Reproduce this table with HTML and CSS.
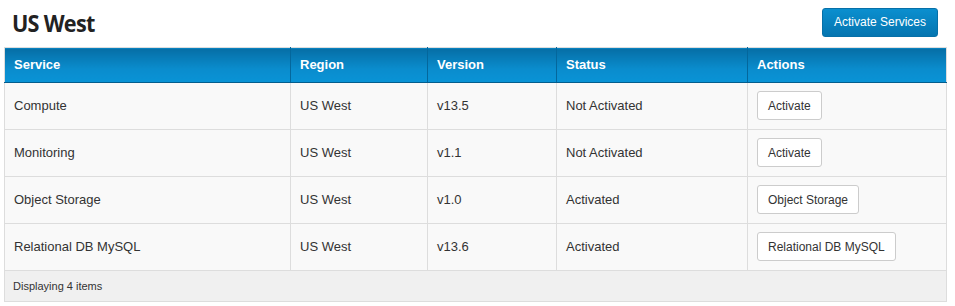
FILE: index.html
```html
<!DOCTYPE html>
<html>
<head>
<meta charset="utf-8">
<link rel="stylesheet" href="styles.css">
</head>
<body>
<div class="page">
  <div class="topbar">
    <h1 class="title">US West</h1>
    <button class="btn-primary">Activate Services</button>
  </div>
  <table class="grid">
    <thead>
      <tr>
        <th class="c1">Service</th>
        <th class="c2">Region</th>
        <th class="c3">Version</th>
        <th class="c4">Status</th>
        <th class="c5">Actions</th>
      </tr>
    </thead>
    <tbody>
      <tr>
        <td>Compute</td><td>US West</td><td>v13.5</td><td>Not Activated</td>
        <td><button class="btn">Activate</button></td>
      </tr>
      <tr>
        <td>Monitoring</td><td>US West</td><td>v1.1</td><td>Not Activated</td>
        <td><button class="btn">Activate</button></td>
      </tr>
      <tr>
        <td>Object Storage</td><td>US West</td><td>v1.0</td><td>Activated</td>
        <td><button class="btn">Object Storage</button></td>
      </tr>
      <tr>
        <td>Relational DB MySQL</td><td>US West</td><td>v13.6</td><td>Activated</td>
        <td><button class="btn">Relational DB MySQL</button></td>
      </tr>
    </tbody>
    <tfoot>
      <tr><td colspan="5" class="foot">Displaying 4 items</td></tr>
    </tfoot>
  </table>
</div>
</body>
</html>
```
FILE: styles.css
```css
* { box-sizing: border-box; }
body {
  margin: 0;
  font-family: "Liberation Sans", Arial, sans-serif;
  font-size: 13px;
  color: #333;
  background: #fff;
}
.page {
  padding: 0 8px 0 4px;
}
.topbar {
  display: flex;
  justify-content: space-between;
  align-items: center;
  height: 47px;
  padding: 0 9px 3px 8px;
}
.title {
  margin: 0;
  font-family: "Open Sans", sans-serif;
  font-weight: 700;
  font-size: 24px;
  letter-spacing: -0.8px;
  color: #222;
  transform: scaleX(0.9);
  transform-origin: left center;
}
.btn-primary {
  height: 29px;
  padding: 0 11px;
  border: 1px solid #0670a8;
  border-radius: 3px;
  background: linear-gradient(#0b8fcf, #0575b0);
  color: #fff;
  font-family: "Liberation Sans", Arial, sans-serif;
  font-size: 12px;
}
.grid {
  width: 943px;
  border-collapse: collapse;
  border: 1px solid #ddd;
}
.grid th {
  height: 35px;
  text-align: left;
  color: #fff;
  font-weight: 700;
  font-size: 13px;
  padding: 0 9px 1px;
  background: linear-gradient(#066ea5, #0a8ccd 60%, #0993d6);
  border-left: 1px solid #04679c;
  border-bottom: 1px solid #045d8d;
}
.grid th:first-child { border-left: none; }
.c1 { width: 286px; }
.c2 { width: 137px; }
.c3 { width: 129px; }
.c4 { width: 191px; }
.grid td {
  height: 47px;
  padding: 0 9px 1px;
  border: 1px solid #ddd;
  border-top: none;
  background: #f9f9f9;
}
.btn {
  height: 29px;
  padding: 0 10px;
  border: 1px solid #ccc;
  border-radius: 3px;
  background: #fff;
  color: #333;
  font-family: "Liberation Sans", Arial, sans-serif;
  font-size: 12px;
}
.grid td.foot {
  height: 31px;
  background: #f0f0f0;
  font-size: 11px;
  padding: 0 8px;
}
```
